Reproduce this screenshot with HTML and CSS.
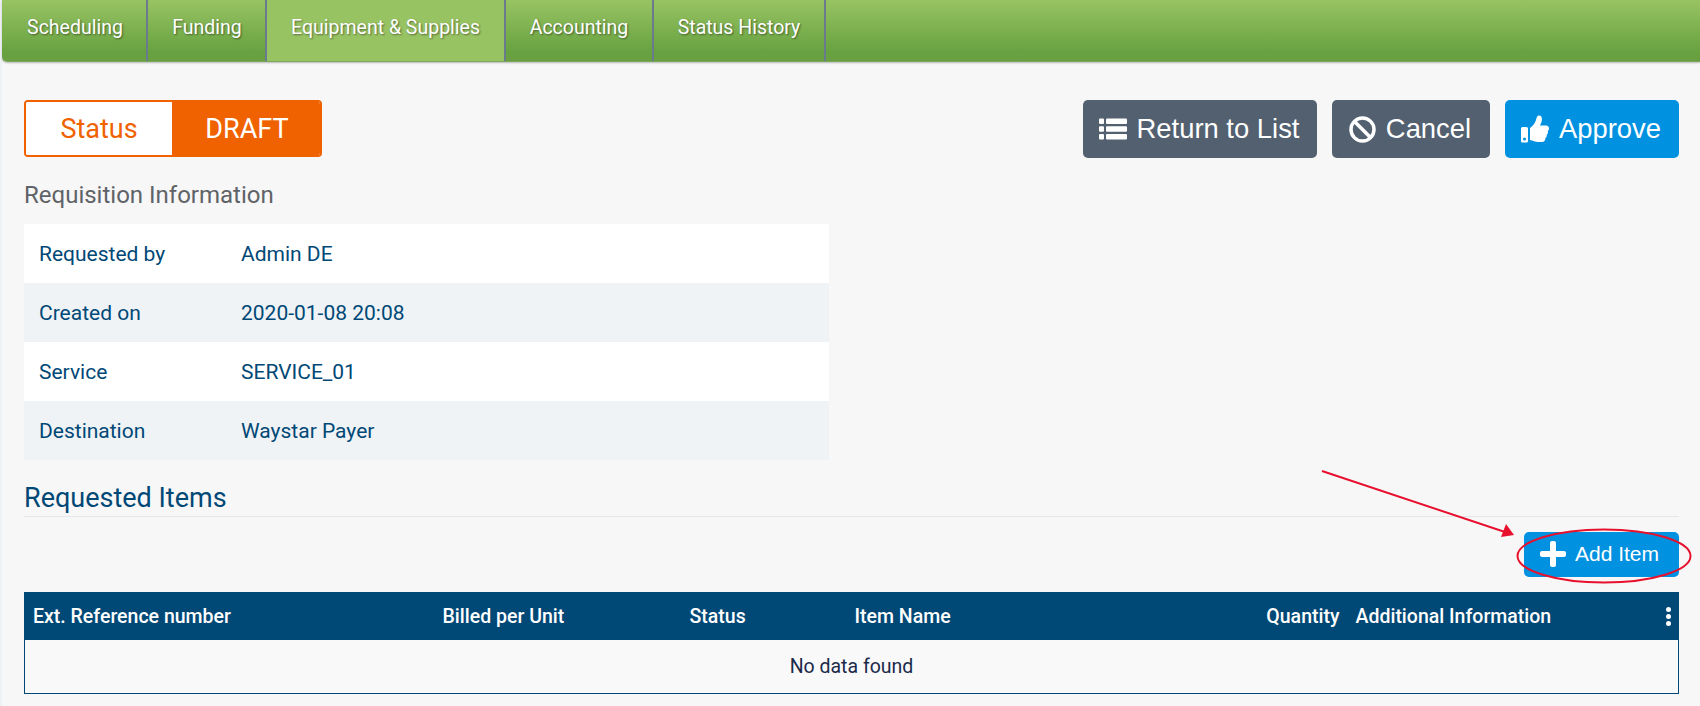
FILE: index.html
```html
<!DOCTYPE html>
<html lang="en">
<head>
<meta charset="utf-8">
<title>Requisition</title>
<link rel="stylesheet" href="styles.css">
</head>
<body>
<div class="page">
  <nav class="tabs">
    <a class="tab t1">Scheduling</a>
    <a class="tab t2">Funding</a>
    <a class="tab t3 active">Equipment &amp; Supplies</a>
    <a class="tab t4">Accounting</a>
    <a class="tab t5">Status History</a>
  </nav>
  <main class="content">
    <div class="top-row">
      <div class="status"><span class="status-label">Status</span><span class="status-value">DRAFT</span></div>
      <div class="actions">
        <button class="btn btn-grey btn-return">
          <svg class="ic" width="28" height="22" viewBox="0 0 28 22" fill="#fff"><rect x="0" y="0.5" width="5" height="5.500" rx="1"/><rect x="7" y="0.5" width="21" height="5.500" rx="1"/><rect x="0" y="8.200" width="5" height="5.500" rx="1"/><rect x="7" y="8.200" width="21" height="5.500" rx="1"/><rect x="0" y="16" width="5" height="5.500" rx="1"/><rect x="7" y="16" width="21" height="5.500" rx="1"/></svg>
          Return to List</button>
        <button class="btn btn-grey btn-cancel">
          <svg class="ic" width="27" height="27" viewBox="0 0 27 27" fill="none" stroke="#fff" stroke-width="3.500"><circle cx="13.5" cy="13.5" r="11.500"/><path d="M5.500 5.500l16 16"/></svg>
          Cancel</button>
        <button class="btn btn-blue btn-approve">
          <svg class="ic" width="28" height="28" viewBox="0 0 28 28" fill="#fff"><path d="M0 13.5a1.5 1.5 0 0 1 1.5-1.5h4A1.5 1.5 0 0 1 7 13.500V26a1.500 1.500 0 0 1-1.500 1.500h-4A1.500 1.500 0 0 1 0 26zM3.500 22.500a1.500 1.500 0 1 0 0 3a1.500 1.500 0 0 0 0-3z" fill-rule="evenodd"/><path d="M9 13c3-2 5-5 6-8 .6-2 1-4.500 3-4.500 3 0 3.500 3.500 2.500 6.500-.4 1.300-1 2.500-1.500 3.500h6c2 0 3 1.500 3 3 0 1-.5 2-1.300 2.500.6 1.500.2 3-1 3.800.3 1.500-.3 2.800-1.400 3.500.2 2-1 3.700-3.300 3.700h-4c-3 0-5-1.500-8-2z"/></svg>
          Approve</button>
      </div>
    </div>
    <h2 class="info-title">Requisition Information</h2>
    <table class="info">
      <tr><td class="k">Requested by</td><td>Admin DE</td></tr>
      <tr><td class="k">Created on</td><td>2020-01-08 20:08</td></tr>
      <tr><td class="k">Service</td><td>SERVICE_01</td></tr>
      <tr><td class="k">Destination</td><td>Waystar Payer</td></tr>
    </table>
    <h2 class="items-title">Requested Items</h2>
    <div class="add-row">
      <button class="btn btn-blue btn-add">
        <svg class="ic" width="26" height="26" viewBox="0 0 26 26" fill="#fff"><rect x="10" y="0" width="6" height="26" rx="2"/><rect x="0" y="10" width="26" height="6" rx="2"/></svg>
        Add Item</button>
    </div>
    <table class="grid">
      <thead>
        <tr>
          <th class="c1">Ext. Reference number</th>
          <th class="c2">Billed per Unit</th>
          <th class="c3">Status</th>
          <th class="c4">Item Name</th>
          <th class="c5">Quantity</th>
          <th class="c6">Additional Information</th>
          <th class="c7"><span class="dots"><i></i><i></i><i></i></span></th>
        </tr>
      </thead>
      <tbody>
        <tr><td colspan="7" class="empty">No data found</td></tr>
      </tbody>
    </table>
  </main>
</div>
<svg class="annotation" width="1700" height="706" viewBox="0 0 1700 706" fill="none">
  <path d="M1322 471L1505 532" stroke="#e8112d" stroke-width="2"/>
  <path d="M1514 535L1501 537L1506 524z" fill="#e8112d"/>
  <ellipse cx="1604" cy="556" rx="86.500" ry="26.500" stroke="#e8112d" stroke-width="2"/>
</svg>
</body>
</html>
```
FILE: styles.css
```css
* { box-sizing: border-box; }
html, body { margin: 0; padding: 0; height: 706px; overflow: hidden; }
body { background: #f7f7f7; font-family: Roboto, "Liberation Sans", sans-serif; color: #004876; position: relative; }
.page { border-left: 2px solid #eff2f5; height: 706px; }
.tabs {
  display: flex; height: 62px;
  background: linear-gradient(#98c363, #68a240 85%, #699f42);
  border-bottom: 1px solid #7aa65a;
  border-bottom-left-radius: 5px;
  box-shadow: 0 1px 2px rgba(0,0,0,.25);
}
.tab {
  display: flex; align-items: center; justify-content: center;
  height: 61px; padding-bottom: 6px;
  color: #fff; font-size: 19.5px;
  text-shadow: 1px 1px 2px rgba(0,0,0,.45);
  border-right: 2px solid #6b7a8c;
}
.t1 { width: 146px; padding-left: 2px; }
.t2 { width: 119px; padding-left: 1px; }
.t3 { width: 239px; }
.t4 { width: 148px; }
.t5 { width: 172px; }
.active { background: #98c363; }
.content { padding: 38px 21px 0 22px; }
.top-row { display: flex; justify-content: space-between; align-items: flex-start; }
.status {
  display: flex; width: 298px; height: 57px;
  border: 2px solid #f06200; border-radius: 4px;
  font-size: 27px; overflow: hidden;
}
.status span { display: flex; align-items: center; justify-content: center; }
.status-label { width: 146px; background: #fff; color: #f06200; }
.status-value { flex: 1; background: #f06200; color: #fff; padding-left: 2px; }
.actions { display: flex; gap: 15px; }
.btn {
  display: flex; align-items: center; justify-content: center;
  border: 0; border-radius: 5px; color: #fff;
  font-family: "Liberation Sans", Arial, sans-serif;
}
.btn-grey { background: #52606f; }
.btn-blue { background: #0091e1; }
.btn-return, .btn-cancel, .btn-approve { height: 58px; font-size: 27.4px; gap: 10px; padding-right: 8px; }
.btn-return { width: 234px; }
.btn-cancel { width: 158px; }
.btn-approve { width: 174px; }
.info-title { margin: 22px 0 0; font-size: 24px; font-weight: 400; line-height: 30px; color: #5f6368; }
.info { margin-top: 14px; width: 805px; border-collapse: collapse; font-size: 21px; }
.info tr { height: 59px; background: #fff; }
.info tr:nth-child(even) { background: #eff3f6; }
.info td { padding: 0 0 0 15px; }
.info .k { width: 202px; }
.items-title {
  margin: 21px 0 0; height: 36px; font-size: 27px; font-weight: 400; line-height: 34px;
  border-bottom: 1px solid #e6e6e6;
}
.add-row { display: flex; justify-content: flex-end; margin-top: 15px; }
.btn-add { width: 155px; height: 45px; font-size: 21px; gap: 9px; padding: 0 4px 2px 0; }
.grid { margin-top: 15px; width: 100%; border-collapse: collapse; table-layout: fixed; border: 1px solid #004876; background: #f9f9f9; }
.grid th { height: 47px; background: #004876; color: #fff; font-size: 19.5px; font-weight: 500; text-align: left; padding: 0 0 0 8px; }
.c1 { width: 410px; }
.c2 { width: 247px; }
.c3 { width: 165px; }
.c4 { width: 412px; }
.grid .c5 { width: 81px; text-align: right; padding: 0; }
.grid .c6 { width: 316px; padding-left: 16px; }
.grid .c7 { padding: 0 7px 0 0; }
.dots { display: flex; flex-direction: column; align-items: flex-end; gap: 1.500px; }
.dots i { display: block; width: 5.500px; height: 5.500px; border-radius: 50%; background: #fff; }
.empty { height: 54px; text-align: center; font-size: 19.5px; color: #1b2a4a; }
.annotation { position: absolute; left: 0; top: 0; pointer-events: none; }
```
